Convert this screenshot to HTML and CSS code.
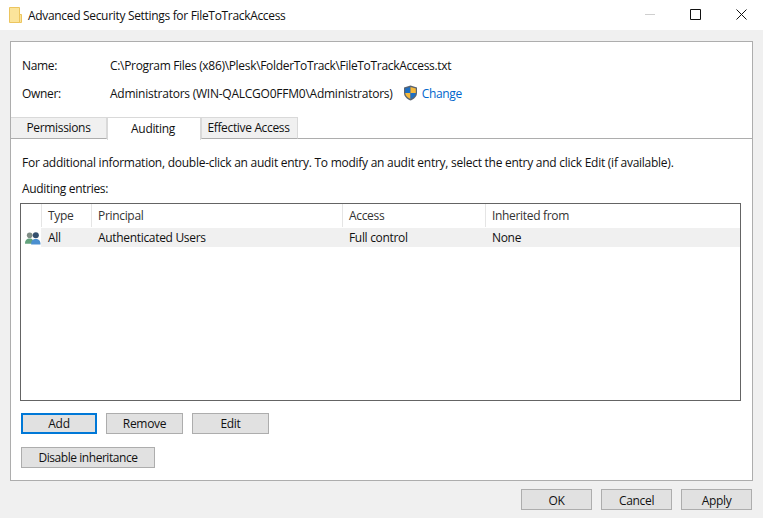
FILE: index.html
```html
<!DOCTYPE html>
<html lang="en">
<head>
    <meta charset="UTF-8">
    <meta name="viewport" content="width=device-width, initial-scale=1.0">
    <title>Advanced Security Settings for FileToTrackAccess</title>
    <link rel="stylesheet" href="styles.css">
</head>
<body>
    <div class="titlebar">
        <svg class="folder-icon" width="13" height="16" viewBox="0 0 13 16">
            <path d="M0.5 0.5H10.5V15.5H0.5Z" fill="#fbe49b" stroke="#ecc55f"/>
            <path d="M10.5 7.5H12.5V15.5H10.5Z" fill="#fbe49b" stroke="#ecc55f"/>
        </svg>
        <span class="title-text">Advanced Security Settings for FileToTrackAccess</span>
        <div class="window-controls">
            <div class="control">
                <svg width="11" height="11" viewBox="0 0 11 11"><path d="M0 5.5H10" stroke="#cfcfcf"/></svg>
            </div>
            <div class="control">
                <svg width="11" height="11" viewBox="0 0 11 11"><path d="M0.5 0.5H10.5V10.5H0.5Z" fill="none" stroke="#111"/></svg>
            </div>
            <div class="control control-close">
                <svg width="11" height="11" viewBox="0 0 11 11"><path d="M0.5 0.5L10.5 10.5M10.5 0.5L0.5 10.5" stroke="#111"/></svg>
            </div>
        </div>
    </div>

    <div class="content">
        <div class="panel">
            <div class="info">
                <div class="info-row">
                    <span class="info-label">Name:</span>
                    <span>C:\Program Files (x86)\Plesk\FolderToTrack\FileToTrackAccess.txt</span>
                </div>
                <div class="info-row">
                    <span class="info-label">Owner:</span>
                    <span class="owner-name">Administrators (WIN-QALCGO0FFM0\Administrators)</span>
                    <svg class="shield" width="15" height="16" viewBox="0 0 15 16">
                        <path d="M7.5 0.5L14 2.5V8C14 11.5 11 14 7.5 15.5C4 14 1 11.5 1 8V2.5Z" fill="#5b6470"/>
                        <path d="M7.5 2L7.5 8H2.2V3.4Z" fill="#1d6fc4"/>
                        <path d="M7.5 2L12.8 3.4V8H7.5Z" fill="#f6b93b"/>
                        <path d="M2.2 8H7.5V14C5 12.8 2.4 11 2.2 8Z" fill="#f6b93b"/>
                        <path d="M7.5 8H12.8C12.6 11 10 12.8 7.5 14Z" fill="#1d6fc4"/>
                    </svg>
                    <span class="link">Change</span>
                </div>
            </div>

            <div class="tabs">
                <div class="tab tab-permissions">Permissions</div>
                <div class="tab tab-auditing active">Auditing</div>
                <div class="tab tab-effective">Effective Access</div>
            </div>

            <div class="tab-body">
                <p class="hint">For additional information, double-click an audit entry. To modify an audit entry, select the entry and click Edit (if available).</p>
                <p class="entries-label">Auditing entries:</p>

                <div class="list">
                    <div class="list-row list-head">
                        <div class="cell cell-icon"></div>
                        <div class="cell">Type</div>
                        <div class="cell">Principal</div>
                        <div class="cell">Access</div>
                        <div class="cell">Inherited from</div>
                    </div>
                    <div class="list-row entry">
                        <div class="cell cell-icon">
                            <svg width="17" height="15" viewBox="0 0 17 15">
                                <circle cx="5" cy="4" r="3" fill="#7f8d86"/>
                                <path d="M0 13C0 9 2 7.500 5 7.500C8 7.500 9 9 9 13Z" fill="#62a27c"/>
                                <circle cx="11.500" cy="4" r="3.200" fill="#34506e"/>
                                <path d="M6.500 14C6.500 9.500 8.500 8 11.500 8C14.500 8 16.500 9.500 16.500 14Z" fill="#4b8fd0"/>
                            </svg>
                        </div>
                        <div class="cell">All</div>
                        <div class="cell">Authenticated Users</div>
                        <div class="cell">Full control</div>
                        <div class="cell">None</div>
                    </div>
                </div>

                <div class="button-row">
                    <button class="btn btn-focus">Add</button>
                    <button class="btn">Remove</button>
                    <button class="btn">Edit</button>
                </div>
                <button class="btn btn-wide">Disable inheritance</button>
            </div>
        </div>

        <div class="footer">
            <button class="btn btn-footer">OK</button>
            <button class="btn btn-footer">Cancel</button>
            <button class="btn btn-footer">Apply</button>
        </div>
    </div>
</body>
</html>
```

FILE: styles.css
```css
* {
    box-sizing: border-box;
}
html, body {
    height: 100%;
}
body {
    margin: 0;
    overflow: hidden;
    display: flex;
    flex-direction: column;
    font-family: 'Open Sans', 'Liberation Sans', sans-serif;
    font-size: 12px;
    letter-spacing: -0.32px;
    color: #111;
    background: #f0f0f0;
}

.titlebar {
    height: 30px;
    flex: none;
    display: flex;
    align-items: center;
    padding-left: 9px;
    background: #fff;
}
.title-text {
    margin-left: 6px;
}
.window-controls {
    margin-left: auto;
    display: flex;
}
.control {
    width: 45px;
    height: 29px;
    margin-bottom: 1px;
    display: flex;
    align-items: center;
    justify-content: center;
}
.control-close {
    padding-left: 2px;
}

.content {
    flex: 1;
    padding: 11px 10px 8px;
    display: flex;
    flex-direction: column;
}
.panel {
    height: 440px;
    flex: none;
    border: 1px solid #adadad;
    background: #fff;
}

.info {
    padding: 9px 11px 0;
    height: 75px;
}
.info-row {
    display: flex;
    align-items: center;
    height: 28px;
}
.info-label {
    width: 88px;
}
.owner-name {
    letter-spacing: -0.24px;
}
.shield {
    margin-left: 10px;
    margin-right: 4px;
}
.link {
    color: #0066cc;
}

.tabs {
    display: flex;
    height: 22px;
    border-bottom: 1px solid #adadad;
}
.tab {
    height: 22px;
    padding-top: 1px;
    text-align: center;
    letter-spacing: -0.34px;
    background: #f0f0f0;
    border: 1px solid #d9d9d9;
    border-bottom: 1px solid #adadad;
}
.tab-permissions {
    width: 96px;
    border-left: none;
}
.tab-auditing {
    width: 94px;
    padding-right: 2px;
}
.tab-effective {
    width: 97px;
    padding-right: 2px;
}
.tab.active {
    height: 23px;
    padding-top: 2px;
    background: #fff;
    border-bottom: none;
}

.tab-body {
    padding: 15px 9px 0;
}
.hint {
    margin: 0;
    line-height: 18px;
    padding-left: 2px;
    letter-spacing: -0.26px;
}
.entries-label {
    margin: 8px 0 5px;
    line-height: 18px;
    padding-left: 2px;
}

.list {
    width: 721px;
    height: 198px;
    border: 1px solid #646464;
}
.list-row {
    display: grid;
    grid-template-columns: 21px 50px 251px 143px 1fr;
}
.list-head {
    height: 23px;
    margin-bottom: 1px;
}
.list-head .cell {
    border-right: 1px solid #e5e5e5;
    color: #333;
}
.list-head .cell:last-child {
    border-right: none;
}
.entry {
    height: 19px;
}
.entry .cell {
    background: #f0f0f0;
}
.entry .cell-icon {
    background: #fff;
    padding: 1px 0 0 4px;
    border-right: 1px solid #f0f0f0;
}
.cell {
    display: flex;
    align-items: center;
    padding-left: 6px;
    white-space: nowrap;
}

.btn {
    height: 21px;
    padding: 0 0 1px;
    font: inherit;
    letter-spacing: inherit;
    color: #111;
    background: #e1e1e1;
    border: 1px solid #adadad;
}
.btn-focus {
    border: 2px solid #0078d7;
}
.button-row {
    display: flex;
    gap: 9px;
    margin: 12px 0 13px 1px;
}
.button-row .btn {
    width: 77px;
}
.button-row .btn-focus {
    width: 76px;
}
.btn-wide {
    width: 134px;
    margin-left: 1px;
    letter-spacing: -0.45px;
}

.footer {
    display: flex;
    justify-content: flex-end;
    gap: 9px;
    margin-top: 8px;
    padding-right: 1px;
}
.btn-footer {
    width: 71px;
    padding-top: 1px;
    padding-bottom: 0;
}
```
